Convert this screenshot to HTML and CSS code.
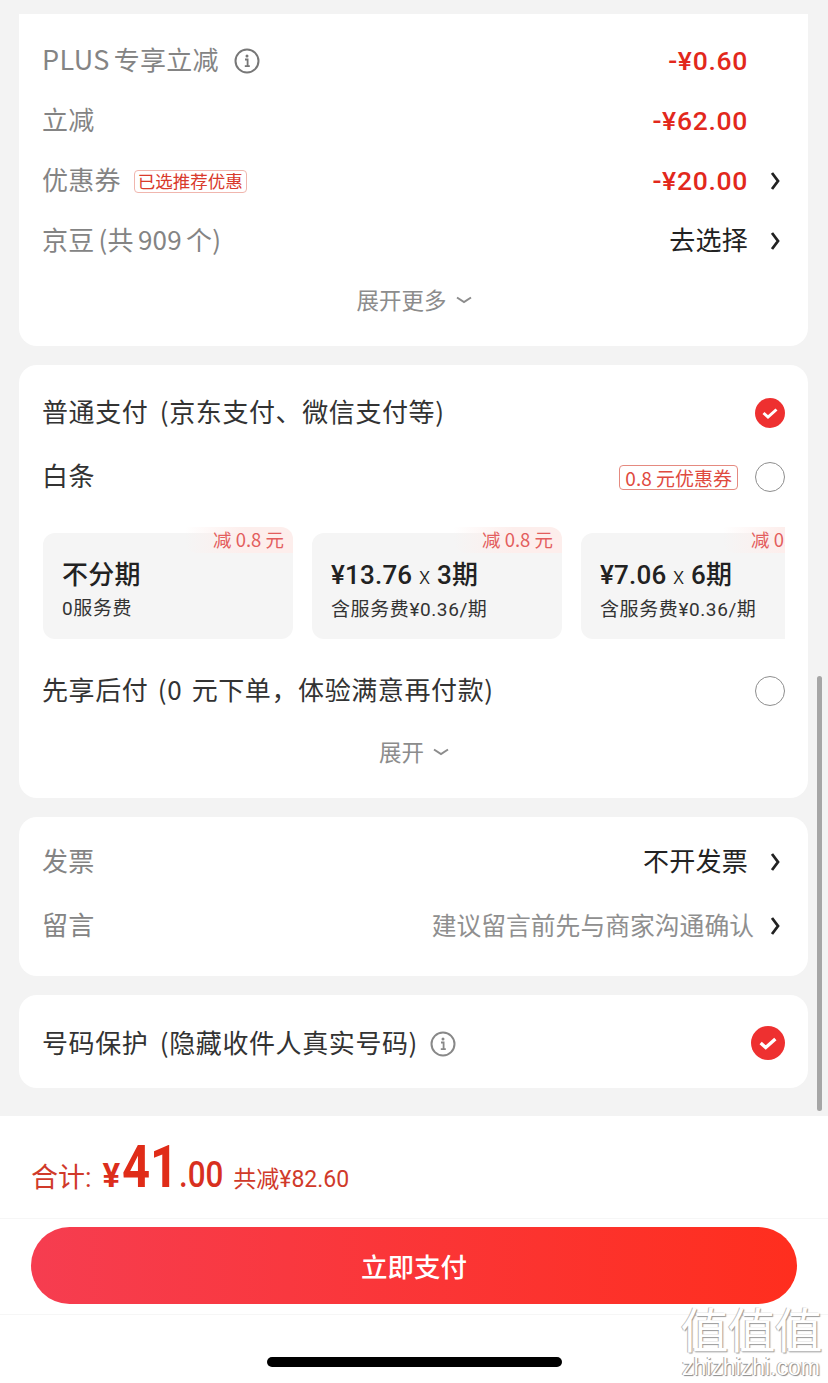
FILE: index.html
```html
<!DOCTYPE html>
<html lang="zh-CN">
<head>
<meta charset="utf-8">
<title>立即支付</title>
<link rel="stylesheet" href="styles.css">
</head>
<body>
<div class="page">
  <main class="main">
    <section class="card card-price">
      <div class="row">
        <div class="left muted"><span class="plus">PLUS</span>专享立减<svg class="info" viewBox="0 0 26 26"><circle cx="13" cy="13" r="11.5" fill="none" stroke="#777" stroke-width="2"/><circle cx="13" cy="8" r="1.5" fill="#777"/><path d="M11 11.5h2.6v6.5M10.8 18.2h5" fill="none" stroke="#777" stroke-width="1.8"/></svg></div>
        <div class="right"><span class="price">-¥0.60</span><span class="chev-space"></span></div>
      </div>
      <div class="row">
        <div class="left muted">立减</div>
        <div class="right"><span class="price">-¥62.00</span><span class="chev-space"></span></div>
      </div>
      <div class="row">
        <div class="left muted">优惠券<span class="badge">已选推荐优惠</span></div>
        <div class="right"><span class="price">-¥20.00</span><svg class="chev" viewBox="0 0 10 20"><path d="M2 2l6 8-6 8" fill="none" stroke="#222" stroke-width="2.8"/></svg></div>
      </div>
      <div class="row">
        <div class="left muted beans">京豆 (共 909 个)</div>
        <div class="right"><span class="value">去选择</span><svg class="chev" viewBox="0 0 10 20"><path d="M2 2l6 8-6 8" fill="none" stroke="#222" stroke-width="2.8"/></svg></div>
      </div>
      <div class="more">展开更多<svg class="down" viewBox="0 0 16 8"><path d="M1 1.5l7 4.5 7-4.5" fill="none" stroke="#8c8c8c" stroke-width="2"/></svg></div>
    </section>

    <section class="card card-pay">
      <div class="pay-row pay-first">
        <div class="left dark">普通支付 (京东支付、微信支付等)</div>
        <svg class="radio" viewBox="0 0 30 30"><circle cx="15" cy="15" r="15" fill="#ee3030"/><path d="M8.5 15l4.5 4 8.5-7.5" fill="none" stroke="#fff" stroke-width="3"/></svg>
      </div>
      <div class="pay-row pay-second">
        <div class="left dark">白条</div>
        <div class="right"><span class="coupon">0.8 元优惠券</span><span class="radio-empty"></span></div>
      </div>
      <div class="plans">
        <div class="plan">
          <span class="plan-tag">减 0.8 元</span>
          <div class="plan-title">不分期</div>
          <div class="plan-sub">0服务费</div>
        </div>
        <div class="plan">
          <span class="plan-tag">减 0.8 元</span>
          <div class="plan-title">¥13.76 <span class="times">x</span> 3期</div>
          <div class="plan-sub">含服务费¥0.36/期</div>
        </div>
        <div class="plan">
          <span class="plan-tag">减 0.8 元</span>
          <div class="plan-title">¥7.06 <span class="times">x</span> 6期</div>
          <div class="plan-sub">含服务费¥0.36/期</div>
        </div>
      </div>
      <div class="pay-row pay-third">
        <div class="left dark tight-words">先享后付 (0 元下单，体验满意再付款)</div>
        <span class="radio-empty"></span>
      </div>
      <div class="more more-pay">展开<svg class="down" viewBox="0 0 16 8"><path d="M1 1.5l7 4.5 7-4.5" fill="none" stroke="#8c8c8c" stroke-width="2"/></svg></div>
    </section>

    <section class="card card-invoice">
      <div class="inv-row">
        <div class="left muted">发票</div>
        <div class="right"><span class="value">不开发票</span><svg class="chev" viewBox="0 0 10 20"><path d="M2 2l6 8-6 8" fill="none" stroke="#222" stroke-width="2.8"/></svg></div>
      </div>
      <div class="inv-row">
        <div class="left muted">留言</div>
        <div class="right"><span class="hint">建议留言前先与商家沟通确认</span><svg class="chev chev-near" viewBox="0 0 10 20"><path d="M2 2l6 8-6 8" fill="none" stroke="#222" stroke-width="2.8"/></svg></div>
      </div>
    </section>

    <section class="card card-phone">
      <div class="left dark phone-label">号码保护 (隐藏收件人真实号码)<svg class="info info-tight" viewBox="0 0 26 26"><circle cx="13" cy="13" r="11.5" fill="none" stroke="#888" stroke-width="2"/><circle cx="13" cy="8" r="1.5" fill="#888"/><path d="M11 11.5h2.6v6.5M10.8 18.2h5" fill="none" stroke="#888" stroke-width="1.8"/></svg></div>
      <svg class="radio radio-big" viewBox="0 0 30 30"><circle cx="15" cy="15" r="15" fill="#ee3030"/><path d="M8.5 15l4.5 4 8.5-7.5" fill="none" stroke="#fff" stroke-width="3"/></svg>
    </section>
  </main>

  <footer class="footer">
    <div class="total">
      <span class="total-label">合计:</span>
      <span class="total-yen">¥</span><span class="total-int">41</span><span class="total-dec">.00</span>
      <span class="total-save">共减¥82.60</span>
    </div>
    <div class="pay-wrap"><button class="pay-btn">立即支付</button></div>
    <div class="home-area"><span class="home-bar"></span></div>
  </footer>

  <div class="scrollbar"></div>
  <div class="watermark"><div class="wm-big">值值值</div><div class="wm-small">zhizhizhi.com</div></div>
</div>
</body>
</html>
```

FILE: styles.css
```css
* { box-sizing: border-box; }
html, body { margin: 0; padding: 0; }
body {
  width: 828px;
  height: 1383px;
  overflow: hidden;
  background: #f3f3f3;
  font-family: "Noto Sans CJK SC", "Noto Sans", sans-serif;
  color: #222;
}
.page { position: relative; height: 1383px; display: flex; flex-direction: column; }
.main { height: 1116px; padding: 14px 20px 0 19px; display: flex; flex-direction: column; gap: 19px; overflow: hidden; background: #f3f3f3; }
.card { width: 789px; flex: none; background: #fff; border-radius: 0 0 18px 18px; padding: 0 23px 0 24px; }
.card-pay, .card-invoice, .card-phone { border-radius: 18px; }

.card-price { height: 332px; padding-top: 17px; }
.row { height: 60px; display: flex; align-items: center; justify-content: space-between; }
.left { display: flex; align-items: center; margin-left: -1px; padding-bottom: 4px; font-size: 26px; line-height: 36px; letter-spacing: .25px; word-spacing: 5px; white-space: pre; font-weight: 400; }
.muted { color: #848484; }
.dark { color: #333; letter-spacing: .6px; }
.tight-words { word-spacing: 3px; }
.beans { word-spacing: -2px; }
.plus { letter-spacing: .4px; margin-right: 4px; font-size: 27px; }
.right { display: flex; align-items: center; }
.price { font-family: "Roboto", "Noto Sans CJK SC", sans-serif; font-size: 26.5px; font-weight: 500; letter-spacing: .7px; padding-bottom: 2px; color: #e2281c; }
.value { font-size: 26px; letter-spacing: .25px; padding-bottom: 6px; font-weight: 400; color: #222; }
.hint { font-size: 24.8px; padding-bottom: 4px; font-weight: 400; color: #8f8f8f; }
.chev-space { display: block; width: 37px; }
.chev { display: block; width: 10px; height: 20px; margin-left: 22px; margin-right: 5px; }
.chev-near { margin-left: 16px; }
.info { width: 26px; height: 26px; margin-left: 15px; margin-top: 4px; }
.info-tight { margin-left: 12px; }
.badge {
  margin-left: 13px; margin-top: 4px; height: 23px; padding: 0 3px; display: inline-flex; align-items: center;
  font-size: 17.5px; letter-spacing: 0; font-weight: 400; line-height: 1; color: #d93a2c;
  border: 1px solid #f0b6ae; border-radius: 4px;
}
.more { display: flex; align-items: center; justify-content: center; height: 48px; margin-top: 4px; font-size: 22.5px; font-weight: 400; color: #8c8c8c; }
.down { width: 16px; height: 8px; margin-left: 9px; margin-top: 2px; }

.card-pay { height: 433px; padding-top: 16px; }
.pay-row { display: flex; align-items: center; justify-content: space-between; }
.pay-first { height: 64px; }
.pay-second { height: 64px; }
.pay-third { height: 64px; margin-top: 20px; }
.radio { display: block; width: 30px; height: 30px; }
.radio-big { width: 34px; height: 34px; margin-top: 2px; }
.radio-empty { display: block; width: 30px; height: 30px; border: 1px solid #8e8e8e; border-radius: 50%; background: #fff; }
.coupon {
  height: 25px; padding: 0 5px; margin-right: 17px; display: inline-flex; align-items: center;
  font-size: 19px; line-height: 1; color: #df4a40; border: 1px solid #e58a80; border-radius: 4px;
}
.plans { display: flex; gap: 19px; overflow: hidden; width: 742px; padding-top: 24px; }
.plan { position: relative; flex: none; width: 250px; height: 106px; background: #f5f5f5; border-radius: 12px; padding: 25px 19px 0 19px; }
.plan-title { font-size: 26px; line-height: 35px; font-weight: 500; letter-spacing: .2px; color: #222; font-family: "Roboto", "Noto Sans CJK SC", sans-serif; white-space: pre; }
.times { font-weight: 300; font-size: 23px; }
.plan-sub { font-size: 19px; line-height: 26px; margin-top: 3px; letter-spacing: .6px; font-weight: 400; color: #333; font-family: "Roboto", "Noto Sans CJK SC", sans-serif; white-space: pre; }
.plan-tag {
  position: absolute; top: -6px; right: 0; height: 26px; padding: 0 9px 3px 28px;
  display: flex; align-items: center;
  font-size: 18.5px; color: #e35d5d; font-weight: 400; white-space: pre;
  background: linear-gradient(90deg, rgba(253,238,236,0), #fdeeec 55%);
  border-radius: 0 12px 0 12px;
}
.more-pay { margin-top: 6px; height: 44px; }

.card-invoice { height: 159px; padding-top: 13px; }
.inv-row { height: 64px; display: flex; align-items: center; justify-content: space-between; }

.card-phone { height: 93px; display: flex; align-items: center; justify-content: space-between; }
.phone-label { margin-top: 5px; }

.footer { flex: none; height: 267px; background: #fff; display: flex; flex-direction: column; }
.total { height: 103px; padding: 21px 0 0 31px; display: flex; align-items: baseline; color: #d8301f; white-space: pre; border-bottom: 1px solid #f6f6f6; font-family: "Roboto", "Noto Sans CJK SC", sans-serif; }
.total-label { font-size: 27px; font-weight: 400; margin-right: 11px; color: #d03a2a; }
.total-yen { font-size: 33px; font-weight: 700; color: #dc2e1c; margin-right: 2px; }
.total-int { display: inline-block; font-size: 59px; line-height: 60px; font-weight: 700; color: #e02c18; transform: scaleX(.83); transform-origin: left bottom; margin-right: -11px; }
.total-dec { display: inline-block; font-size: 37px; font-weight: 500; color: #d8301f; transform: scaleX(.85); transform-origin: left bottom; margin-right: -8px; }
.total-save { font-size: 23px; margin-left: 10px; font-weight: 400; color: #d03a2a; }
.pay-wrap { height: 96px; padding: 8px 31px 0; border-bottom: 1px solid #f6f6f6; }
.pay-btn {
  display: block; width: 766px; height: 77px; border: 0; border-radius: 39px; padding: 0;
  background: linear-gradient(90deg, #f63d50, #ff2e1e);
  color: #fff; font-family: "Noto Sans CJK SC", sans-serif; font-size: 26.5px; font-weight: 500;
}
.home-area { height: 68px; display: flex; justify-content: center; padding-top: 42px; }
.home-bar { display: block; width: 295px; height: 10px; border-radius: 5px; background: #000; }

.scrollbar { position: absolute; left: 817px; top: 676px; width: 5px; height: 435px; border-radius: 3px; background: #a6a6a6; }
.watermark { position: absolute; left: 678px; top: 1302px; width: 146px; text-align: center; color: #fff; pointer-events: none; }
.wm-big { font-size: 48px; line-height: 50px; letter-spacing: -1px; font-weight: 400; text-shadow: 1px 1px 1px #999, -1px 0 0 #bbb; white-space: nowrap; }
.wm-small { font-size: 23px; line-height: 22px; margin-top: 4px; text-shadow: 1px 1px 1px #888, -1px 0 0 #aaa; font-family: "Liberation Sans", sans-serif; }
```
